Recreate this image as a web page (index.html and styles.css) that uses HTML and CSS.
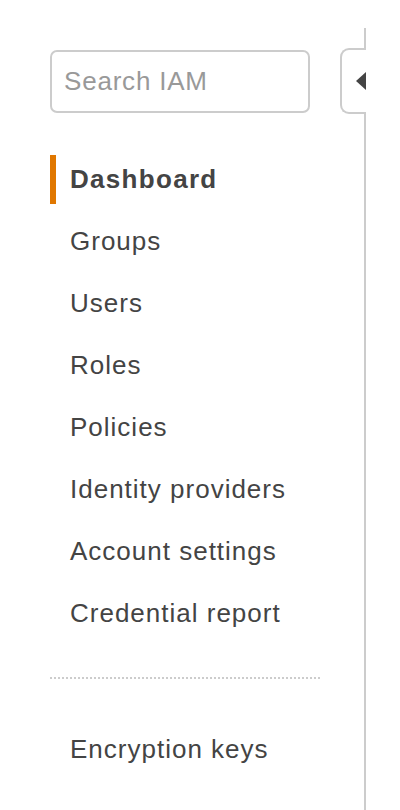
FILE: index.html
```html
<!DOCTYPE html>
<html>
<head>
<meta charset="utf-8">
<link rel="stylesheet" href="styles.css">
</head>
<body>
<div class="page">
  <aside class="sidebar">
    <input class="search" type="text" placeholder="Search IAM">
    <nav class="nav">
      <a class="item active">Dashboard</a>
      <a class="item">Groups</a>
      <a class="item">Users</a>
      <a class="item">Roles</a>
      <a class="item">Policies</a>
      <a class="item">Identity providers</a>
      <a class="item">Account settings</a>
      <a class="item">Credential report</a>
    </nav>
    <hr class="divider">
    <nav class="nav extra">
      <a class="item">Encryption keys</a>
    </nav>
  </aside>
  <div class="rail">
    <div class="rail-line top"></div>
    <div class="tab"><span class="arrow"></span></div>
    <div class="rail-line bottom"></div>
  </div>
</div>
</body>
</html>
```
FILE: styles.css
```css
html, body {
  margin: 0;
  padding: 0;
  background: #fff;
  height: 100%;
}
body {
  font-family: "Liberation Sans", Arial, sans-serif;
  color: #444;
}
.page {
  display: flex;
  height: 810px;
}
.sidebar {
  width: 270px;
  padding: 50px 0 0 50px;
  display: flex;
  flex-direction: column;
}
.search {
  box-sizing: border-box;
  width: 260px;
  height: 63px;
  border: 2px solid #ccc;
  border-radius: 7px;
  padding: 0 0 0 12px;
  font-family: inherit;
  font-size: 26px;
  letter-spacing: 0.8px;
  color: #444;
  outline: none;
  margin: 0;
}
.search::placeholder {
  color: #999;
}
.nav {
  display: flex;
  flex-direction: column;
  gap: 13px;
  margin-top: 42px;
}
.item {
  display: block;
  height: 49px;
  line-height: 49px;
  padding-left: 20px;
  font-size: 26px;
  color: #444;
  letter-spacing: 1px;
}
.item.active {
  font-weight: bold;
  letter-spacing: 1.3px;
  border-left: 6px solid #e07700;
  padding-left: 14px;
}
.divider {
  margin: 39px 0 0 0;
  width: 270px;
  border: 0;
  border-top: 2px dotted #ccc;
  height: 0;
}
.nav.extra {
  margin-top: 46px;
}
.rail {
  margin-left: 20px;
  width: 26px;
  display: flex;
  flex-direction: column;
  align-items: flex-end;
  padding-top: 28px;
}
.rail-line {
  width: 2px;
  background: #ccc;
}
.rail-line.top {
  height: 20px;
}
.rail-line.bottom {
  flex: 1;
}
.tab {
  box-sizing: border-box;
  width: 26px;
  height: 66px;
  border: 2px solid #ccc;
  border-right: 0;
  border-radius: 9px 0 0 9px;
  display: flex;
  align-items: center;
  justify-content: flex-end;
}
.arrow {
  width: 0;
  height: 0;
  border-top: 9px solid transparent;
  border-bottom: 9px solid transparent;
  border-right: 10px solid #444;
}
```
